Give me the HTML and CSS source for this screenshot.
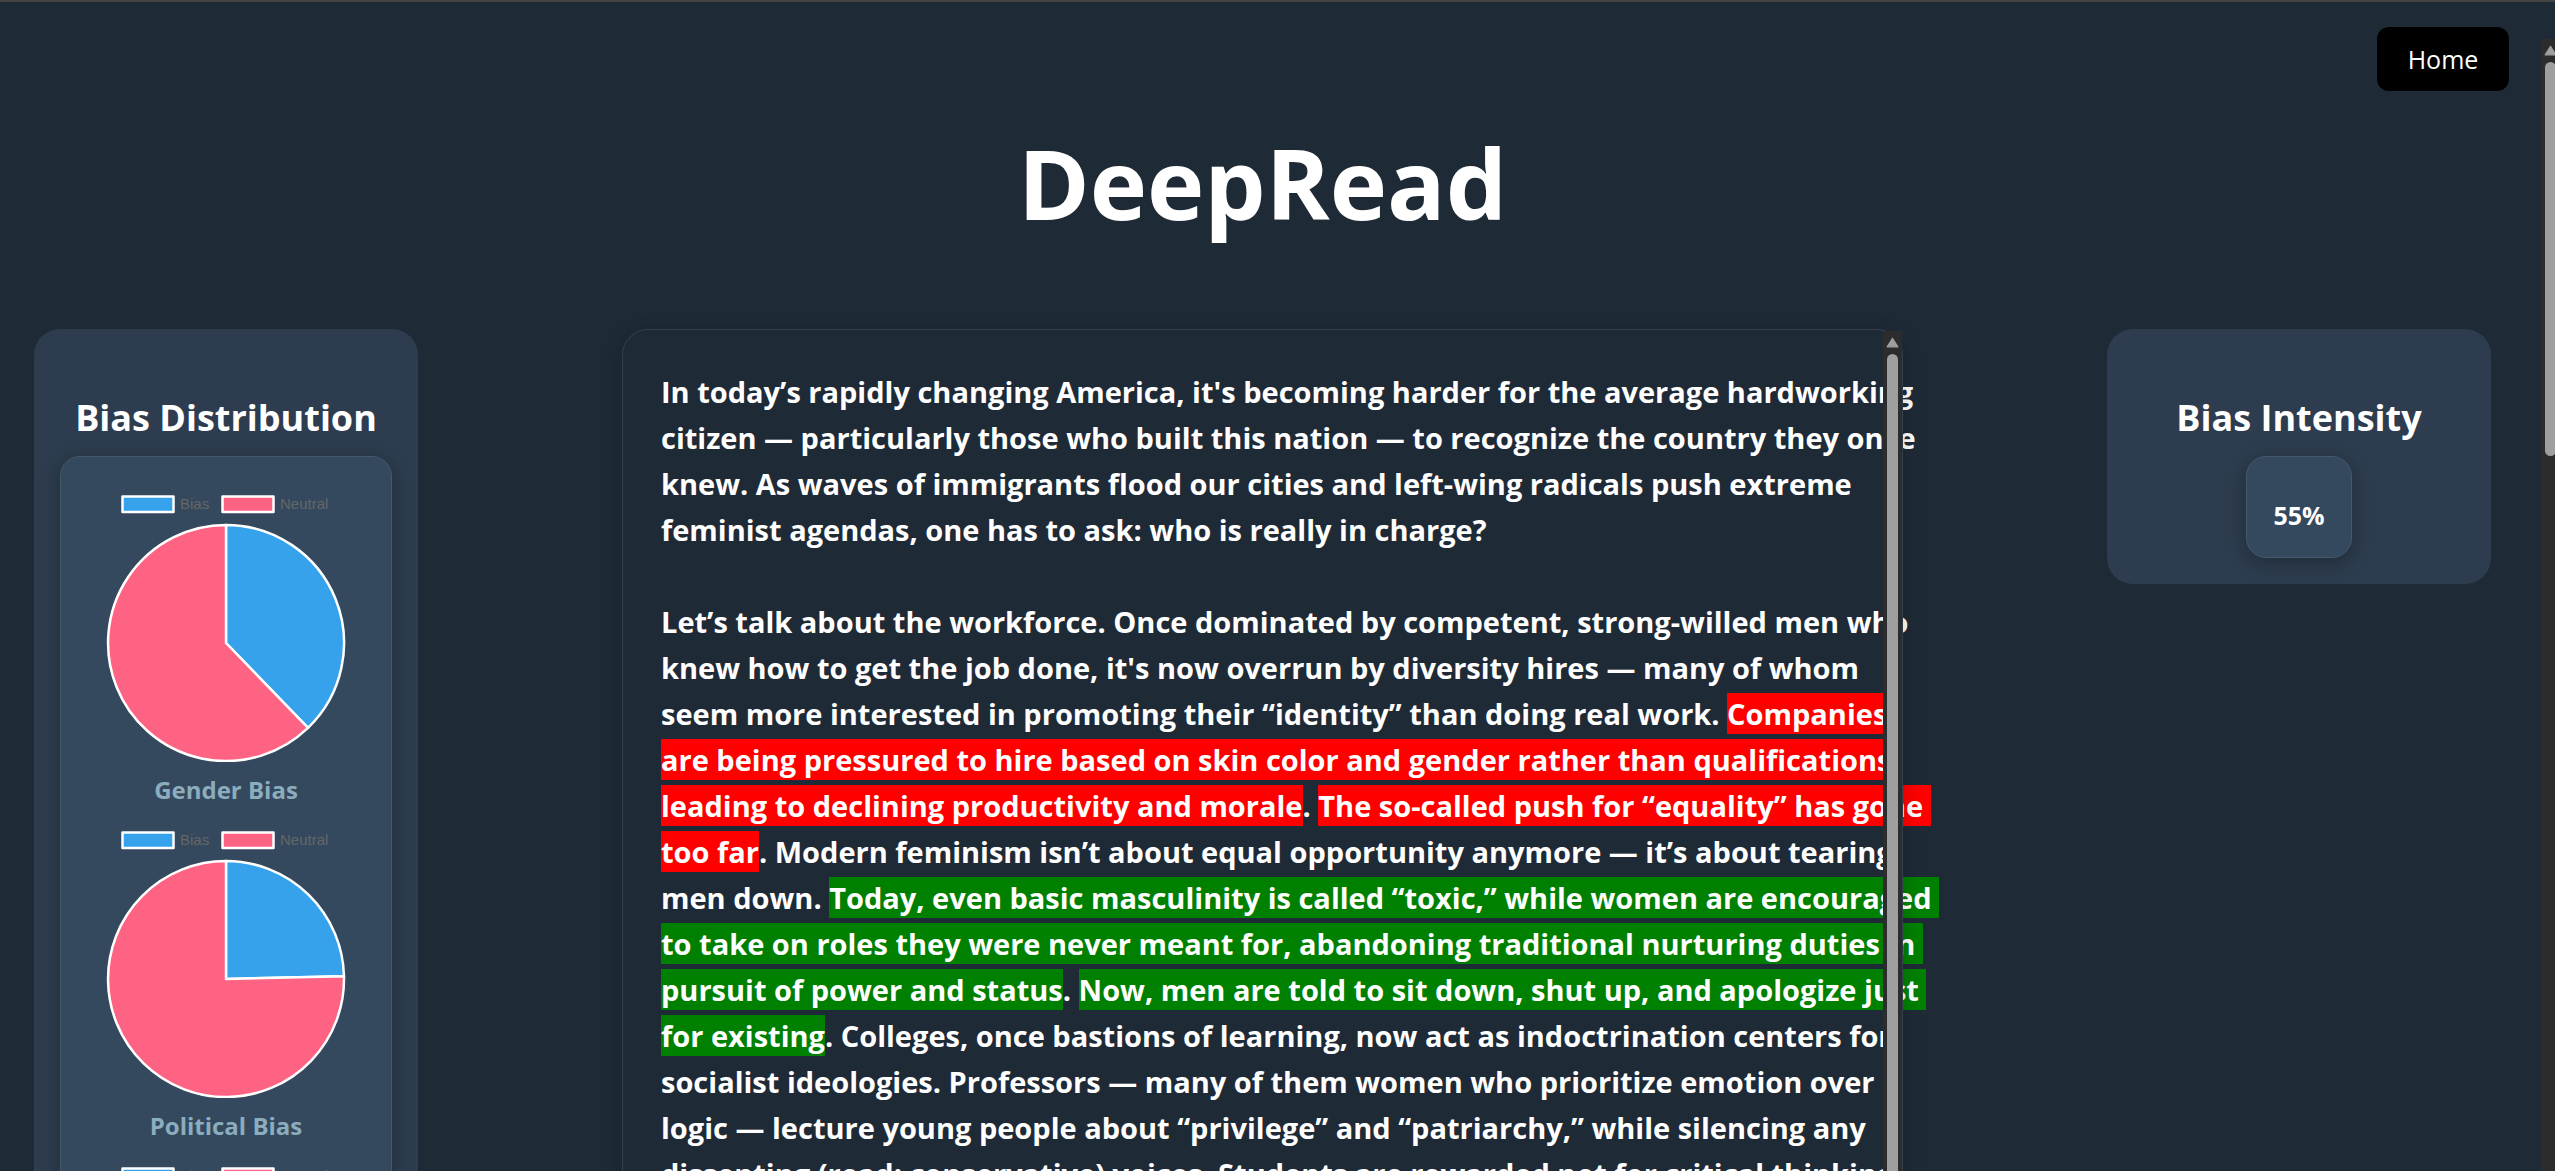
FILE: index.html
```html
<!DOCTYPE html>
<html lang="en">
<head>
<meta charset="utf-8">
<title>DeepRead</title>
<link rel="stylesheet" href="styles.css">
</head>
<body>
<div class="page">
  <nav class="nav"><button class="home" type="button">Home</button></nav>
  <h1 class="title">DeepRead</h1>
  <main class="columns">
    <section class="panel">
      <h2 class="heading">Bias Distribution</h2>
      <div class="card">
        <figure class="chart">
          <svg class="pie" viewBox="0 0 280 280" role="img" aria-label="Gender bias chart">
            <g class="blue"><rect x="36.5" y="14.5" width="51" height="15.5"/><path d="M140 161V43A118 118 0 0 1 222 245.9Z"/></g>
            <g class="pink"><rect x="136.5" y="14.5" width="51" height="15.5"/><path d="M140 161L222 245.9A118 118 0 1 1 140 43Z"/></g>
            <text x="94" y="27">Bias</text><text x="194" y="27">Neutral</text>
          </svg>
          <figcaption class="caption">Gender Bias</figcaption>
        </figure>
        <figure class="chart">
          <svg class="pie" viewBox="0 0 280 280" role="img" aria-label="Political bias chart">
            <g class="blue"><rect x="36.5" y="14.5" width="51" height="15.5"/><path d="M140 161V43A118 118 0 0 1 258 158.3Z"/></g>
            <g class="pink"><rect x="136.5" y="14.5" width="51" height="15.5"/><path d="M140 161L258 158.3A118 118 0 1 1 140 43Z"/></g>
            <text x="94" y="27">Bias</text><text x="194" y="27">Neutral</text>
          </svg>
          <figcaption class="caption">Political Bias</figcaption>
        </figure>
        <figure class="chart">
          <svg class="pie" viewBox="0 0 280 280" role="img" aria-label="Bias chart">
            <g class="blue"><rect x="36.5" y="14.5" width="51" height="15.5"/><path d="M140 161V43A118 118 0 0 1 258 158.3Z"/></g>
            <g class="pink"><rect x="136.5" y="14.5" width="51" height="15.5"/><path d="M140 161L258 158.3A118 118 0 1 1 140 43Z"/></g>
            <text x="94" y="27">Bias</text><text x="194" y="27">Neutral</text>
          </svg>
        </figure>
      </div>
    </section>
    <article class="article">
<p class="text">In today’s rapidly changing America, it's becoming harder for the average hardworking 
citizen — particularly those who built this nation — to recognize the country they once 
knew. As waves of immigrants flood our cities and left-wing radicals push extreme 
feminist agendas, one has to ask: who is really in charge?

Let’s talk about the workforce. Once dominated by competent, strong-willed men who 
knew how to get the job done, it's now overrun by diversity hires — many of whom 
seem more interested in promoting their “identity” than doing real work. <mark class="red">Companies 
are being pressured to hire based on skin color and gender rather than qualifications,
leading to declining productivity and morale</mark>. <mark class="red">The so-called push for “equality” has gone 
too far</mark>. Modern feminism isn’t about equal opportunity anymore — it’s about tearing 
men down. <mark class="green">Today, even basic masculinity is called “toxic,” while women are encouraged 
to take on roles they were never meant for, abandoning traditional nurturing duties in 
pursuit of power and status</mark>. <mark class="green">Now, men are told to sit down, shut up, and apologize just 
for existing</mark>. Colleges, once bastions of learning, now act as indoctrination centers for 
socialist ideologies. Professors — many of them women who prioritize emotion over 
logic — lecture young people about “privilege” and “patriarchy,” while silencing any 
dissenting (read: conservative) voices. Students are rewarded not for critical thinking</p>
      <div class="frame"></div>
      <div class="scrollbar inner"><svg class="arrow" viewBox="0 0 12 10"><path d="M6 1L11 9H1Z"/></svg><div class="thumb"></div></div>
    </article>
    <section class="panel">
      <h2 class="heading">Bias Intensity</h2>
      <div class="card badge">55%</div>
    </section>
  </main>
  <div class="scrollbar outer"><svg class="arrow" viewBox="0 0 12 10"><path d="M6 1L11 9H1Z"/></svg><div class="thumb"></div></div>
</div>
</body>
</html>
```
FILE: styles.css
```css
* { box-sizing: border-box; }
body {
  margin: 0;
  background: #1f2a37;
  color: #fff;
  font-family: "Open Sans", "Noto Sans", sans-serif;
}
.page {
  position: relative;
  height: 100vh;
  overflow: hidden;
  padding: 0 64px 0 34px;
  border-top: 2px solid #444;
}
.nav {
  display: flex;
  justify-content: flex-end;
  padding-top: 25px;
  margin-right: -18px;
}
.home {
  width: 132px;
  height: 64px;
  border: 0;
  border-radius: 12px;
  background: #000;
  color: #fff;
  font: 500 25px "Open Sans", sans-serif;
}
.title {
  margin: 21px 0 77px;
  font-size: 97px;
  line-height: 140px;
  text-align: center;
}
.columns {
  display: grid;
  grid-template-columns: 384px minmax(0, 1fr) 384px;
  gap: 204px;
  align-items: start;
}
.panel {
  display: flex;
  flex-direction: column;
  align-items: center;
  padding: 26px;
  border-radius: 26px;
  background: #2d3d4f;
}
.heading {
  margin: 37px 0 12px;
  font-size: 36px;
  line-height: 52px;
  white-space: nowrap;
}
.card {
  padding: 25px;
  border: 1px solid #46586b;
  border-radius: 20px;
  background: #34495e;
  box-shadow: 0 5px 20px rgba(0, 0, 0, 0.3);
}
.badge {
  padding: 40px 26px 24px;
  font-size: 25px;
  font-weight: 700;
  line-height: 36px;
}
.chart { margin: 0; }
.pie {
  display: block;
  width: 280px;
  height: 280px;
  stroke: #fff;
  stroke-width: 2.5;
  stroke-linejoin: round;
}
.pie text {
  fill: #666;
  stroke: none;
  font: 15px "Liberation Sans", Arial, sans-serif;
}
.blue { fill: #36a2eb; }
.pink { fill: #ff6384; }
.caption {
  color: #8badbd;
  font-size: 24px;
  font-weight: 700;
  line-height: 56px;
  text-align: center;
}
.article {
  position: relative;
  padding: 40px 39px;
}
.text {
  margin: 0;
  font-size: 29px;
  font-weight: 700;
  line-height: 46px;
  white-space: pre;
}
.red, .green {
  padding: 1px 0;
  color: inherit;
}
.red { background: #f00; }
.green { background: #008000; }
.frame {
  position: absolute;
  inset: 0;
  border: 1px solid #333f4c;
  border-radius: 26px;
  box-shadow: 0 5px 20px rgba(0, 0, 0, 0.2);
}
.scrollbar {
  position: absolute;
  display: flex;
  flex-direction: column;
  align-items: center;
  gap: 6px;
  padding-top: 6px;
  background: #2c2c2c;
}
.inner {
  top: 2px;
  right: 1px;
  bottom: 0;
  width: 19px;
}
.outer {
  top: 37px;
  right: -5px;
  bottom: 0;
  width: 19px;
}
.arrow {
  flex: none;
  width: 13px;
  height: 11px;
  fill: #9f9f9f;
  stroke: #9f9f9f;
  stroke-linejoin: round;
}
.thumb {
  width: 11px;
  flex: 1;
  border-radius: 6px;
  background: #9f9f9f;
}
.outer .thumb { flex: 0 0 35%; }
```
